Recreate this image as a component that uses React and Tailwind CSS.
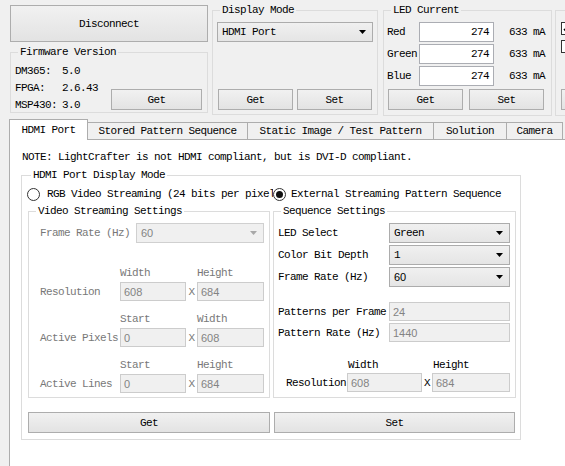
const sans = "font-['Liberation_Sans',sans-serif] tracking-normal text-[11px]"

const Btn = ({ children, className = '' }) => (
  <button
    type="button"
    className={`flex items-center justify-center border border-[#adadad] bg-linear-to-b from-[#f1f1f1] to-[#e3e3e3] ${className}`}
  >
    {children}
  </button>
)

const Group = ({ title, className = '', legend = 'ml-[7px]', children }) => (
  <fieldset className={`min-w-0 border border-[#dcdcdc] ${className}`}>
    <legend className={`${legend} px-[2px] leading-[12px]`}>{title}</legend>
    {children}
  </fieldset>
)

const Arrow = ({ color }) => (
  <svg width="7" height="4" viewBox="0 0 7 4">
    <path d="M0 0h7L3.5 4z" fill={color} />
  </svg>
)

const Combo = ({ value, disabled, sansValue, className = '' }) => (
  <div
    className={`flex items-center justify-between border pl-[4px] pr-[6px] ${
      disabled
        ? 'border-[#d0d0d0] bg-[#f0f0f0] text-[#838383]'
        : 'border-[#acacac] bg-linear-to-b from-[#f0f0f0] to-[#e5e5e5]'
    } ${className}`}
  >
    <span className={sansValue ? sans : ''}>{value}</span>
    <Arrow color={disabled ? '#a8a8a8' : '#000'} />
  </div>
)

const Field = ({ value, className = '' }) => (
  <div className={`flex items-center border border-[#cccccc] bg-[#f0f0f0] pl-[3px] text-[#838383] ${sans} ${className}`}>
    {value}
  </div>
)

const Radio = ({ checked }) => (
  <span className="flex h-[13px] w-[13px] shrink-0 items-center justify-center rounded-full border border-[#333] bg-white">
    {checked && <span className="h-[7px] w-[7px] rounded-full bg-[#111]" />}
  </span>
)

const LedRow = ({ name }) => (
  <div className="flex h-[20px] items-center">
    <span className="w-[32px]">{name}</span>
    <div className="flex h-[20px] w-[75px] items-center justify-end border border-[#abadb3] bg-white pr-[4px]">274</div>
    <span className="ml-[15px]">633 mA</span>
  </div>
)

const VideoRow = ({ label, a, b }) => (
  <>
    <div className="mt-[12px] flex h-[12px] items-center pl-[11px] text-[#787878] first:mt-[24px]">
      <span className="w-[80px]" />
      <span className="w-[77px]">{a.h}</span>
      <span>{b.h}</span>
    </div>
    <div className="mt-[3px] flex h-[19px] items-center pl-[11px] text-[#787878]">
      <span className="w-[80px]">{label}</span>
      <Field value={a.v} className="h-[19px] w-[66px]" />
      <span className="w-[11px] text-center">X</span>
      <Field value={b.v} className="h-[19px] w-[67px]" />
    </div>
  </>
)

const tabs = [
  ['Stored Pattern Sequence', 'w-[160px]'],
  ['Static Image / Test Pattern', 'w-[186px]'],
  ['Solution', 'w-[73px]'],
  ['Camera', 'w-[56px]'],
]

export default function App() {
  return (
    <div className="h-[466px] w-[565px] overflow-hidden bg-[#f0f0f0] font-['Liberation_Mono',monospace] text-[11px] leading-[12px] tracking-[-0.6px] text-black">
      {/* top controls */}
      <div className="flex h-[116px] items-start">
        <div className="ml-[10px] flex w-[198px] shrink-0 flex-col">
          <Btn className="mt-[5px] h-[37px] w-full">Disconnect</Btn>
          <Group title="Firmware Version" className="mt-[4px] h-[67px]">
            <div className="flex">
              <div className="mt-[4px] flex flex-col pl-[4px]">
                {[['DM365:', '5.0'], ['FPGA:', '2.6.43'], ['MSP430:', '3.0']].map(([k, v]) => (
                  <div key={k} className="flex h-[17px] items-center">
                    <span className="w-[47px]">{k}</span>
                    <span>{v}</span>
                  </div>
                ))}
              </div>
              <Btn className="mr-[5px] ml-auto mt-[31px] h-[21px] w-[91px]">Get</Btn>
            </div>
          </Group>
        </div>

        <Group title="Display Mode" className="ml-[4px] mt-[4px] h-[111px] w-[166px] shrink-0">
          <Combo value="HDMI Port" className="ml-[4px] mt-[6px] h-[20px] w-[156px]" />
          <div className="ml-[5px] mt-[47px] flex gap-[4px]">
            <Btn className="h-[21px] w-[75px]">Get</Btn>
            <Btn className="h-[21px] w-[75px]">Set</Btn>
          </div>
        </Group>

        <Group title="LED Current" className="ml-[5px] mt-[4px] h-[112px] w-[169px] shrink-0">
          <div className="mt-[6px] flex flex-col gap-[2px] pl-[3px]">
            <LedRow name="Red" />
            <LedRow name="Green" />
            <LedRow name="Blue" />
          </div>
          <div className="mt-[3px] flex gap-[6px] pl-[4px]">
            <Btn className="h-[21px] w-[75px]">Get</Btn>
            <Btn className="h-[21px] w-[75px]">Set</Btn>
          </div>
        </Group>

        <div className="ml-[3px] mt-[10px] h-[106px] w-[40px] shrink-0 border border-[#dcdcdc]">
          <div className="ml-[5px] mt-[11px] flex h-[13px] w-[13px] items-center justify-center border border-[#333] bg-white">
            <svg width="9" height="8" viewBox="0 0 9 8">
              <path d="M1 4l2.5 2.5L8 1" stroke="#000" strokeWidth="1.6" fill="none" />
            </svg>
          </div>
          <div className="ml-[5px] mt-[5px] h-[13px] w-[13px] border border-[#333] bg-white" />
          <Btn className="ml-[5px] mt-[36px] h-[21px] w-[40px]" />
        </div>
      </div>

      {/* tab bar */}
      <div className="mt-[3px] flex h-[20px] items-end pl-[9px]">
        <div className="relative z-10 -mb-[1px] flex h-[21px] w-[79px] shrink-0 items-center justify-center border-x border-t border-[#adadad] bg-white">
          HDMI Port
        </div>
        {tabs.map(([t, w]) => (
          <div key={t} className={`flex h-[17px] shrink-0 items-center justify-center border-t border-r border-[#adadad] bg-[#f0f0f0] ${w}`}>
            {t}
          </div>
        ))}
      </div>

      {/* tab pane */}
      <div className="ml-[9px] h-[327px] border-t border-l border-[#adadad] bg-white">
        <div className="mt-[11px] pl-[12px]">NOTE: LightCrafter is not HDMI compliant, but is DVI-D compliant.</div>

        <Group title="HDMI Port Display Mode" legend="ml-[9px]" className="ml-[11px] mt-[6px] h-[271px] w-[500px]">
          <div className="mt-[6px] flex h-[14px] items-center pl-[5px]">
            <div className="flex w-[246px] shrink-0 items-center overflow-hidden">
              <Radio />
              <span className="ml-[7px] whitespace-nowrap">RGB Video Streaming (24 bits per pixel)</span>
            </div>
            <Radio checked />
            <span className="ml-[5px] whitespace-nowrap">External Streaming Pattern Sequence</span>
          </div>

          <div className="mt-[4px] flex">
            <Group title="Video Streaming Settings" className="ml-[6px] h-[193px] w-[242px] shrink-0">
              <div className="mt-[6px] flex h-[20px] items-center pl-[11px]">
                <span className="w-[96px] text-[#787878]">Frame Rate (Hz)</span>
                <Combo value="60" disabled sansValue className="h-[20px] w-[128px]" />
              </div>
              <div className="flex flex-col">
                <VideoRow label="Resolution" a={{ h: 'Width', v: '608' }} b={{ h: 'Height', v: '684' }} />
                <VideoRow label="Active Pixels" a={{ h: 'Start', v: '0' }} b={{ h: 'Width', v: '608' }} />
                <VideoRow label="Active Lines" a={{ h: 'Start', v: '0' }} b={{ h: 'Height', v: '684' }} />
              </div>
            </Group>

            <Group title="Sequence Settings" className="ml-[3px] h-[193px] w-[243px] shrink-0">
              <div className="mt-[6px] flex flex-col gap-[2px] pl-[4px]">
                {[['LED Select', 'Green', false], ['Color Bit Depth', '1', false], ['Frame Rate (Hz)', '60', true]].map(([l, v, s]) => (
                  <div key={l} className="flex h-[20px] items-center">
                    <span className="w-[111px]">{l}</span>
                    <Combo value={v} sansValue={s} className="h-[20px] w-[121px]" />
                  </div>
                ))}
              </div>
              <div className="mt-[15px] flex flex-col gap-[2px] pl-[4px]">
                {[['Patterns per Frame', '24'], ['Pattern Rate (Hz)', '1440']].map(([l, v]) => (
                  <div key={l} className="flex h-[19px] items-center">
                    <span className="w-[111px] whitespace-nowrap">{l}</span>
                    <Field value={v} className="h-[19px] w-[121px]" />
                  </div>
                ))}
              </div>
              <div className="mt-[17px] flex h-[12px] items-center">
                <span className="w-[74px]" />
                <span className="w-[85px]">Width</span>
                <span>Height</span>
              </div>
              <div className="mt-[2px] flex h-[19px] items-center">
                <span className="w-[73px] pr-[1px] text-right">Resolution</span>
                <Field value="608" className="h-[19px] w-[75px]" />
                <span className="w-[10px] text-center">X</span>
                <Field value="684" className="h-[19px] w-[78px]" />
              </div>
            </Group>
          </div>

          <div className="mt-[14px] flex">
            <Btn className="ml-[6px] h-[21px] w-[242px]">Get</Btn>
            <Btn className="ml-[4px] h-[21px] w-[241px]">Set</Btn>
          </div>
        </Group>
      </div>
    </div>
  )
}
